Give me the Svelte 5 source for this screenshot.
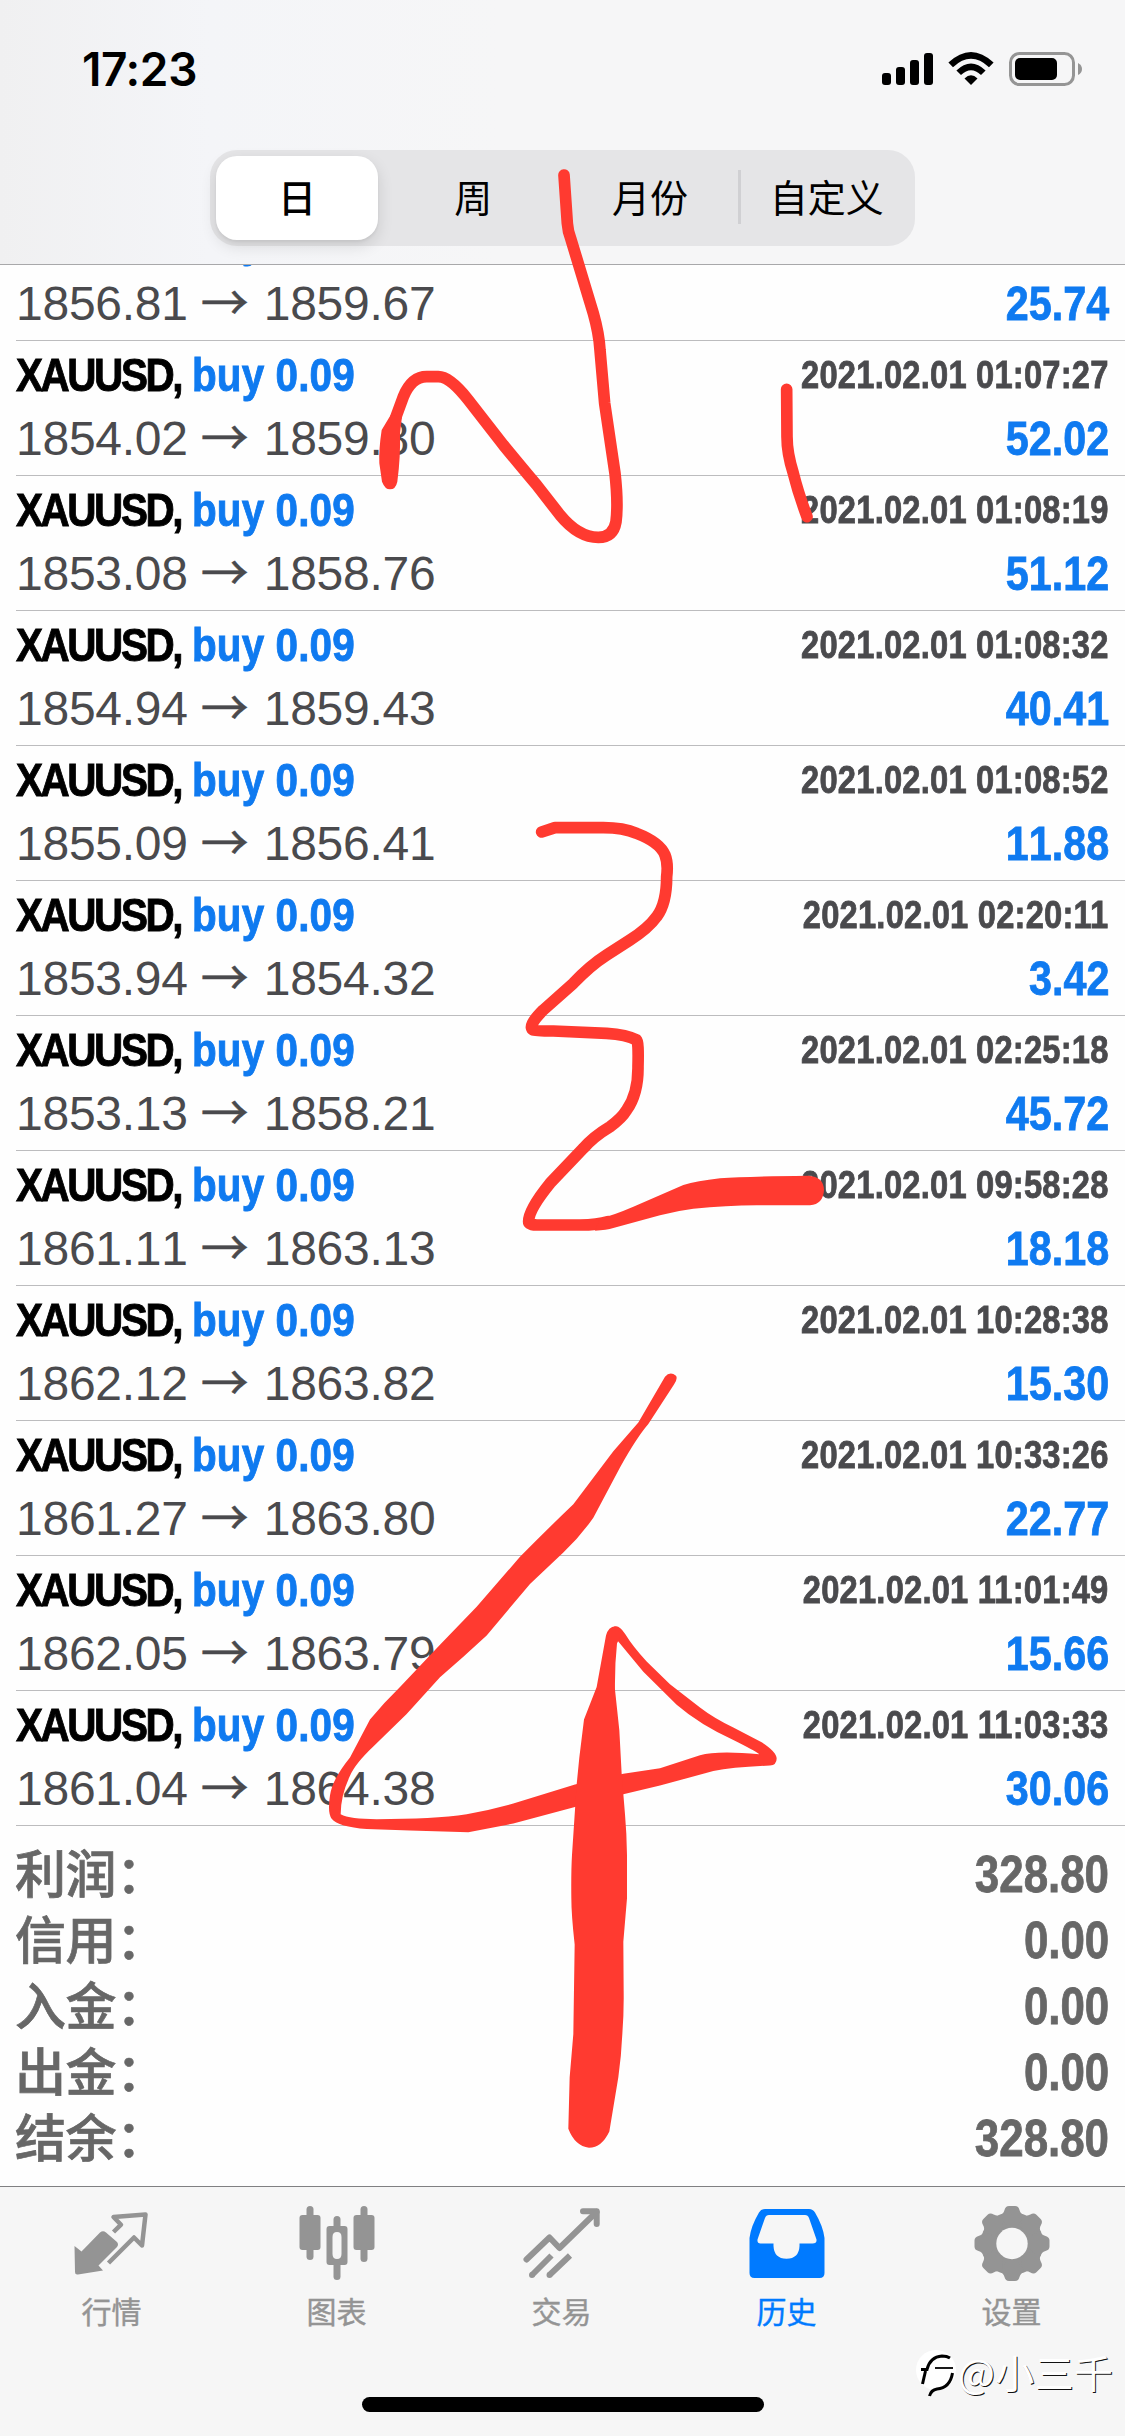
<script>
  const ranges = ['日', '周', '月份', '自定义'];

  const deals = [
    ['1856.81', '1859.67', '2021.02.01 01:05:12', '25.74'],
    ['1854.02', '1859.80', '2021.02.01 01:07:27', '52.02'],
    ['1853.08', '1858.76', '2021.02.01 01:08:19', '51.12'],
    ['1854.94', '1859.43', '2021.02.01 01:08:32', '40.41'],
    ['1855.09', '1856.41', '2021.02.01 01:08:52', '11.88'],
    ['1853.94', '1854.32', '2021.02.01 02:20:11', '3.42'],
    ['1853.13', '1858.21', '2021.02.01 02:25:18', '45.72'],
    ['1861.11', '1863.13', '2021.02.01 09:58:28', '18.18'],
    ['1862.12', '1863.82', '2021.02.01 10:28:38', '15.30'],
    ['1861.27', '1863.80', '2021.02.01 10:33:26', '22.77'],
    ['1862.05', '1863.79', '2021.02.01 11:01:49', '15.66'],
    ['1861.04', '1864.38', '2021.02.01 11:03:33', '30.06'],
  ];

  const totals = [
    ['利润', '328.80'],
    ['信用', '0.00'],
    ['入金', '0.00'],
    ['出金', '0.00'],
    ['结余', '328.80'],
  ];
</script>

<div class="screen">
  <header>
    <div class="status">
      <span class="time">17:23</span>
      <svg class="indicators" width="204" height="36" viewBox="0 0 204 36">
        <g>
          <rect x="-1" y="21" width="9" height="12" rx="3" />
          <rect x="13" y="15" width="9" height="18" rx="3" />
          <rect x="27" y="8" width="9" height="25" rx="3" />
          <rect x="41" y="1" width="9" height="32" rx="3" />
        </g>
        <g transform="translate(88 33)">
          <path d="M0 0L-6.5 -6.4Q0 -13 6.5 -6.4Z" />
          <path d="M-14.6 -14.6Q0 -28.6 14.6 -14.6L10 -10Q0 -19.4 -10 -10Z" />
          <path d="M-22.6 -22.4Q0 -43.6 22.6 -22.4L18 -17.8Q0 -34.6 -18 -17.8Z" />
        </g>
        <rect x="127.500" y="1.500" width="63" height="31" rx="9" fill="none" stroke="#959595" stroke-width="3" />
        <rect x="132" y="6" width="42" height="22" rx="5" />
        <path d="M195 11Q199 13 199 17T195 23Z" fill="#959595" />
      </svg>
    </div>
    <div class="segmented">
      {#each ranges as label, i}
        <div class="segment" class:active={i === 0} class:divided={i === 3}>{label}</div>
      {/each}
    </div>
  </header>

  <main>
    {#each deals as [open, close, time, profit], i}
      <div class="deal">
        <div class="line top">
          <span class="symbol">XAUUSD,</span>
          <span class="side">buy 0.09</span>
          {#if i > 0}<span class="date">{time}</span>{/if}
        </div>
        <div class="line bottom">
          <span class="prices">{open} <span class="arrow">→</span> {close}</span>
          <span class="profit">{profit}</span>
        </div>
      </div>
    {/each}
    <div class="totals">
      {#each totals as [label, value]}
        <div class="total">
          <span class="label">{label}：</span>
          <span class="value">{value}</span>
        </div>
      {/each}
    </div>
  </main>

  <nav>
    <div class="tabs">
      <div class="tab">
        <svg width="90" height="90" viewBox="0 0 90 90">
          <path d="M7.500 50L14.500 55.500L33 36.500Q36 34 39 36.500L50 46Q52 48.500 50 51L31.500 69.500L36 74.500L11 78.500Q8 79 8 76Z" />
          <path d="M46.500 36L54 28.700L46.500 21L78.500 18.500L75 49.500L67 41.500L41.500 67" fill="none" stroke="#949494" stroke-width="4.500" stroke-linejoin="round" />
        </svg>
        <span>行情</span>
      </div>
      <div class="tab">
        <svg width="90" height="90" viewBox="0 0 90 90">
          <rect x="14.500" y="10" width="7" height="54" rx="3.500" />
          <rect x="7.500" y="19" width="21" height="35" rx="3" />
          <rect x="68.500" y="10" width="7" height="56" rx="3.500" />
          <rect x="61.500" y="19" width="21" height="35" rx="3" />
          <rect x="41.500" y="20" width="7" height="16" rx="3.500" />
          <rect x="41.500" y="64" width="7" height="20" rx="3.500" />
          <path fill-rule="evenodd" d="M37.500 30h15q3 0 3 3v33q0 3-3 3h-15q-3 0-3-3V33q0-3 3-3ZM45 36q-4.500 0-4.500 5v17q0 5 4.500 5t4.500-5V41q0-5-4.500-5Z" />
        </svg>
        <span>图表</span>
      </div>
      <div class="tab">
        <svg width="90" height="90" viewBox="0 0 90 90">
          <g fill="none" stroke="#949494" stroke-width="6" stroke-linecap="round" stroke-linejoin="round">
            <path d="M9.500 63.500L32.500 41.500L42.500 52L79.500 16" />
            <path d="M66 15.200H79.700V28" />
          </g>
          <g fill="none" stroke="#949494" stroke-width="6">
            <path d="M15 79L34.500 59.500M32.500 79L53 59.500" />
            <path d="M15 79h0M32.500 79h0" stroke-linecap="round" />
          </g>
        </svg>
        <span>交易</span>
      </div>
      <div class="tab current">
        <svg width="90" height="90" viewBox="0 0 90 90">
          <path fill-rule="evenodd" d="M23 13H67Q71 13 73 16.500Q81 30 82.500 42V77Q82.500 82 77.500 82H12.500Q7.500 82 7.500 77V42Q9 30 17 16.500Q19 13 23 13ZM27 19Q24 19 23 22L15.500 43.500Q15 47.500 18.500 47.500H31.500V50Q32 62.500 44.500 62.800Q57 62.500 57.500 50V47.500H70.500Q75 47.500 74.500 43.500L67 22Q66 19 63 19Z" />
        </svg>
        <span>历史</span>
      </div>
      <div class="tab">
        <svg width="90" height="90" viewBox="0 0 90 90">
          <defs>
            <mask id="gear-hole">
              <rect width="90" height="90" fill="#fff" />
              <circle cx="45" cy="47.500" r="15.700" fill="#000" />
            </mask>
          </defs>
          <g mask="url(#gear-hole)">
            <circle cx="45" cy="47.500" r="31.300" />
            {#each [0, 45, 90, 135, 180, 225, 270, 315] as angle}
              <path transform="rotate({angle} 45 47.500)" d="M32 20Q36.500 18 37.500 14Q38.500 10 42 10H48Q51.500 10 52.500 14Q53.500 18 58 20L50 30H40Z" />
            {/each}
          </g>
        </svg>
        <span>设置</span>
      </div>
    </div>
    <div class="home"></div>
  </nav>

  <div class="watermark">
    <svg width="42" height="50" viewBox="0 0 42 50">
      <circle cx="20" cy="20" r="20" fill="#fff" />
      <g fill="none" stroke="#000" stroke-width="3">
        <path d="M5 19.500H11Q14 7 26 6Q31 6 34 8" />
        <path d="M9.500 21L6.500 34" />
        <path d="M19 18H37" stroke-width="1.800" />
        <path d="M36.500 23Q34 38 21 39Q15 40 13.500 46" />
      </g>
    </svg>
    <span>@小三千</span>
  </div>

  <!-- freehand marker strokes lying over the page -->
  <svg class="ink" width="1125" height="2436" viewBox="0 0 1125 2436">
    <g transform="translate(360 150) scale(.33333)" stroke-width="35">
      <path class="pen" d="M612 75L622 220Q624 245 632 265L700 490Q717 550 720 600L734 760L765 970Q775 1060 768 1115Q760 1162 715 1162Q655 1162 600 1095L530 1005Q500 970 430 885L325 750Q270 680 235 680H200Q155 680 130 740L108 800" />
      <path d="M92 795L65 840Q56 900 58 940L66 995Q75 1018 90 1018Q107 1018 112 995Q122 920 120 850L126 800Z" />
      <path class="pen" d="M1280 718L1281 860Q1281 910 1300 970Q1315 1030 1341 1100" />
    </g>
    <g transform="translate(480 780) scale(.33333)" stroke-width="35">
      <path class="pen" d="M185 156L225 143H370Q430 143 470 160Q540 187 555 225Q565 250 560 290Q560 370 530 410Q505 445 450 480L380 525Q330 557 280 610L190 690Q140 740 160 750Q165 753 220 753L380 760Q440 764 470 780Q476 785 474 860Q475 940 440 990Q425 1015 390 1040Q340 1070 310 1105L210 1210Q145 1290 146 1325Q146 1334 170 1335H290Q350 1336 385 1325" />
      <path d="M360 1315Q400 1306 460 1280L610 1215Q650 1203 720 1195Q800 1189 985 1187Q1031 1190 1032 1230Q1030 1272 990 1276H830Q740 1277 640 1286Q590 1292 540 1306L400 1344Q380 1350 345 1352Z" />
    </g>
    <g transform="translate(300 1340) scale(.33333 .54209)">
      <path d="M1095 68Q1110 57 1128 66Q1134 71 1122 82L1045 155Q1010 180 960 235L880 328Q840 363 790 392L690 450L560 545Q490 585 420 622L320 690L220 750Q165 782 150 804Q122 840 122 875Q150 884 230 884Q400 884 500 875Q570 867 640 855L825 820L970 800L1080 790L1200 766Q1250 757 1378 764Q1365 758 1300 738Q1200 710 1130 673L1030 612L953 555L940 530Q955 523 975 542Q1000 567 1040 593L1110 635L1200 678Q1240 697 1300 715L1385 742Q1430 760 1430 772Q1430 784 1410 785Q1300 788 1240 795L1080 822L970 838L822 862L640 892L505 908L330 905L200 902Q115 898 95 883Q82 872 90 840Q97 810 150 770L210 700Q250 670 300 640L420 562L530 492L660 400Q740 350 820 303L940 205L1015 152Z" />
      <path d="M918 545Q925 529 946 528L962 545L951 560Q944 600 945 645L958 720L965 800L975 875Q980 910 981 950V1030L970 1110L971 1200Q972 1240 967 1280Q964 1320 955 1360L928 1460Q905 1490 867 1490Q825 1487 805 1455L809 1360L820 1280L824 1115Q814 1060 814 1030Q813 980 816 950L830 820L838 770L852 700L890 640Z" />
    </g>
  </svg>
</div>

<style>
  :global(body) {
    background: #fff;
  }
  .screen {
    position: relative;
    display: flex;
    flex-direction: column;
    width: 1125px;
    height: 2436px;
    overflow: hidden;
    background: #fefefe;
    font-family: 'Liberation Sans', 'Noto Sans CJK SC', sans-serif;
    font-kerning: none;
  }
  header {
    flex: none;
    box-sizing: border-box;
    height: 265px;
    border-bottom: 1px solid #a8a8aa;
    background: linear-gradient(90deg, #f0f0f1, #f4f5f8 210px, #f6f6f7 500px);
  }
  .status {
    display: flex;
    justify-content: space-between;
    box-sizing: border-box;
    height: 150px;
    padding: 51px 38px 0 82px;
  }
  .indicators {
    margin-top: 1px;
    overflow: visible;
  }
  .time {
    font: 600 46px/36px Inter, sans-serif;
    letter-spacing: -0.4px;
  }
  .segmented {
    display: flex;
    box-sizing: border-box;
    width: 705px;
    height: 96px;
    margin-left: 210px;
    padding: 6px 0 6px 6px;
    border-radius: 27px;
    background: #e5e5e7;
  }
  .segment {
    position: relative;
    flex: 1 1 0;
    border-radius: 21px;
    text-align: center;
    font: 400 38px/80px 'Noto Sans CJK SC', sans-serif;
  }
  .active {
    flex: none;
    width: 162px;
    margin-right: 7px;
    background: #fff;
    box-shadow: 0 6px 16px rgba(0, 0, 0, 0.12), 0 2px 3px rgba(0, 0, 0, 0.05);
    font-weight: 500;
  }
  .divided::before {
    content: '';
    position: absolute;
    left: 0;
    top: 14px;
    width: 3px;
    height: 54px;
    background: #d0d0d3;
  }
  main {
    flex: none;
    box-sizing: border-box;
    height: 1921px;
    overflow: hidden;
    padding-left: 16px;
  }
  .deal {
    box-sizing: border-box;
    height: 135px;
    padding: 5px 16px 0 0;
    border-bottom: 1px solid #bcbcbe;
  }
  .deal:first-child {
    margin-top: -59px;
  }
  .line {
    display: flex;
    white-space: nowrap;
  }
  .top {
    height: 60px;
    font: 700 47px/58px 'Liberation Sans', sans-serif;
  }
  /* condensed bold: the regular bold face squeezed horizontally */
  .symbol,
  .side {
    transform: scaleX(0.86);
    transform-origin: 0 50%;
    -webkit-text-stroke: 0.9px currentColor;
  }
  .symbol {
    width: 176px;
    letter-spacing: -2.8px;
  }
  .side {
    color: #0f7af0;
    letter-spacing: 0.15px;
  }
  .date,
  .profit,
  .value {
    font-weight: 700;
    transform: scaleX(0.86);
    transform-origin: 100% 50%;
    -webkit-text-stroke: 0.8px currentColor;
  }
  .date {
    margin-left: auto;
    font-size: 38px;
    letter-spacing: 0.25px;
    color: #4a4a4d;
  }
  .bottom {
    justify-content: space-between;
    font-size: 48px;
    line-height: 66px;
    color: #4a4a4d;
  }
  .prices {
    letter-spacing: -0.25px;
  }
  .arrow {
    font-family: 'Noto Sans CJK SC', sans-serif;
    line-height: 1;
    margin-right: 2px;
    -webkit-text-stroke: 0.5px currentColor;
  }
  .profit {
    color: #0f7af0;
  }
  .totals {
    padding: 16px 16px 0 0;
  }
  .total {
    display: flex;
    justify-content: space-between;
    height: 66px;
    line-height: 66px;
    font-size: 51px;
    color: #676767;
  }
  .label {
    margin: -4px 0 0 -1px;
    font-family: 'Noto Sans CJK SC', sans-serif;
    font-weight: 500;
    letter-spacing: -0.4px;
    -webkit-text-stroke: 0.7px currentColor;
  }
  nav {
    flex: 1;
    border-top: 1px solid #808082;
    background: #f6f6f6;
  }
  .tabs {
    display: grid;
    grid-template-columns: repeat(5, 225px);
    height: 210px;
    margin-left: -1px;
    padding-top: 9px;
    box-sizing: border-box;
    color: #949494;
    fill: #949494;
  }
  .tab {
    display: flex;
    flex-direction: column;
    align-items: center;
    font: 30px/48px 'Noto Sans CJK SC', sans-serif;
    -webkit-text-stroke: 0.4px currentColor;
  }
  .current {
    color: #007aff;
    fill: #007aff;
  }
  .home {
    width: 402px;
    height: 15px;
    margin: 0 auto;
    border-radius: 8px;
    background: #000;
  }
  .watermark {
    position: absolute;
    left: 916px;
    top: 2350px;
    display: flex;
    font: 400 39px/42px 'Noto Sans CJK SC', sans-serif;
    letter-spacing: 0.4px;
    color: #fff;
    text-shadow: 1px 1px 0 #111;
  }
  .ink {
    position: absolute;
    left: 0;
    top: 0;
    fill: #ff3a30;
  }
  .pen {
    fill: none;
    stroke: #ff3a30;
    stroke-linecap: round;
    stroke-linejoin: round;
  }
</style>
